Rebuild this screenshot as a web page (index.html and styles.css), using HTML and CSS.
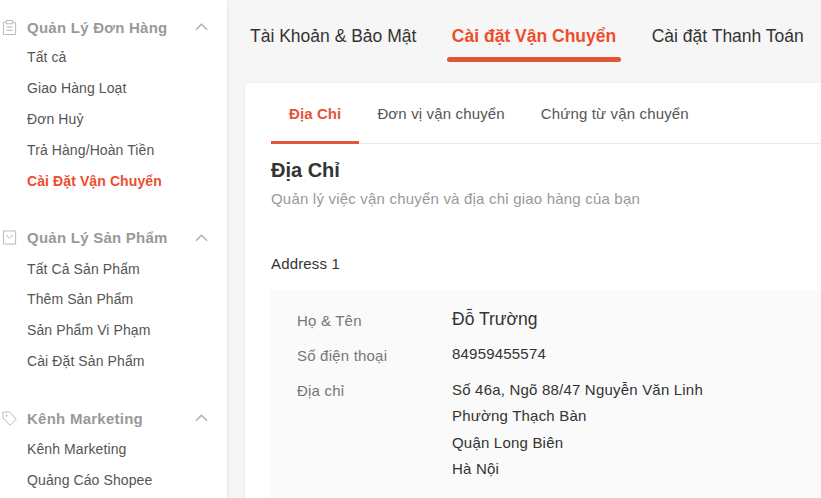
FILE: index.html
```html
<!DOCTYPE html>
<html lang="vi">
<head>
    <meta charset="UTF-8" />
    <title>Cài đặt Vận Chuyển</title>
    <link rel="stylesheet" href="styles.css">
</head>
<body>
    <aside class="sidebar">
        <section class="group">
            <div class="group-title">
                <svg class="group-icon" viewBox="0 0 16 16"><path d="M4 2.500H1.500v13h13v-13H12M4.500 .5h7v3.500h-7zM4.500 7.500h7M4.500 11h7"/></svg>
                <span>Quản Lý Đơn Hàng</span>
                <svg class="chevron" viewBox="0 0 14 8"><path d="M1 7l6-6 6 6"/></svg>
            </div>
            <a href="#">Tất cả</a>
            <a href="#">Giao Hàng Loạt</a>
            <a href="#">Đơn Huỷ</a>
            <a href="#">Trả Hàng/Hoàn Tiền</a>
            <a href="#" class="active">Cài Đặt Vận Chuyển</a>
        </section>
        <section class="group">
            <div class="group-title">
                <svg class="group-icon" viewBox="0 0 16 16"><path d="M1.500 1h13v14h-13zM5 5c.5 4 5.500 4 6 0"/></svg>
                <span>Quản Lý Sản Phẩm</span>
                <svg class="chevron" viewBox="0 0 14 8"><path d="M1 7l6-6 6 6"/></svg>
            </div>
            <a href="#">Tất Cả Sản Phẩm</a>
            <a href="#">Thêm Sản Phẩm</a>
            <a href="#">Sản Phẩm Vi Phạm</a>
            <a href="#">Cài Đặt Sản Phẩm</a>
        </section>
        <section class="group">
            <div class="group-title">
                <svg class="group-icon" viewBox="0 0 16 16"><path d="M.8 1.500l7-.7 7.400 7.900-6.500 6.500-7.600-7.500zM4.300 4.500h1v1h-1z"/></svg>
                <span>Kênh Marketing</span>
                <svg class="chevron" viewBox="0 0 14 8"><path d="M1 7l6-6 6 6"/></svg>
            </div>
            <a href="#">Kênh Marketing</a>
            <a href="#">Quảng Cáo Shopee</a>
        </section>
    </aside>

    <main class="main">
        <nav class="top-tabs">
            <a href="#">Tài Khoản &amp; Bảo Mật</a>
            <a href="#" class="active">Cài đặt Vận Chuyển</a>
            <a href="#">Cài đặt Thanh Toán</a>
        </nav>
        <div class="card">
            <nav class="sub-tabs">
                <a href="#" class="active">Địa Chỉ</a>
                <a href="#">Đơn vị vận chuyển</a>
                <a href="#">Chứng từ vận chuyển</a>
            </nav>
            <h2>Địa Chỉ</h2>
            <p class="subtitle">Quản lý việc vận chuyển và địa chỉ giao hàng của bạn</p>
            <p class="address-name">Address 1</p>
            <div class="address">
                <div class="row">
                    <span class="label">Họ &amp; Tên</span>
                    <span class="name">Đỗ Trường</span>
                </div>
                <div class="row">
                    <span class="label">Số điện thoại</span>
                    <span class="value">84959455574</span>
                </div>
                <div class="row">
                    <span class="label">Địa chỉ</span>
                    <div class="value lines">
                        <span>Số 46a, Ngõ 88/47 Nguyễn Văn Linh</span>
                        <span>Phường Thạch Bàn</span>
                        <span>Quận Long Biên</span>
                        <span>Hà Nội</span>
                    </div>
                </div>
            </div>
        </div>
    </main>
</body>
</html>
```
FILE: styles.css
```css
* {
    margin: 0;
    padding: 0;
    box-sizing: border-box;
    font-family: "Liberation Sans", Arial, sans-serif;
}
html, body {
    height: 100%;
    overflow: hidden;
}
body {
    display: flex;
    background: #f6f6f6;
    color: #333;
}
a {
    text-decoration: none;
    color: inherit;
}
.sidebar {
    width: 227px;
    flex-shrink: 0;
    padding-top: 17.4px;
    background: #fff;
    box-shadow: 0 1px 4px rgba(0, 0, 0, 0.1);
}
.group {
    margin-bottom: 32px;
}
.group-title {
    display: flex;
    align-items: center;
    height: 20px;
    padding-left: 2px;
    margin-bottom: 4.6px;
    color: #999;
    font-size: 15px;
    font-weight: 700;
    letter-spacing: 0.25px;
}
.group + .group .group-title {
    margin-bottom: 5.2px;
}
.group-title span {
    width: 168px;
    margin-left: 10px;
}
.group-icon {
    width: 15px;
    height: 15px;
    fill: none;
    stroke: #b4b4b4;
    stroke-width: 1;
}
.chevron {
    width: 13px;
    height: 8px;
    fill: none;
    stroke: #aaa;
    stroke-width: 1.3;
}
.group > a {
    display: flex;
    align-items: center;
    height: 30.8px;
    padding-left: 27px;
    color: #555;
    font-size: 14px;
    letter-spacing: 0.1px;
}
.group > a.active {
    color: #ee4d2d;
    font-weight: 700;
}
.main {
    flex: 1;
    min-width: 0;
    padding-left: 18px;
}
.top-tabs {
    display: flex;
    gap: 35.5px;
    height: 83px;
    padding: 24px 0 0 5px;
    font-size: 17.5px;
    white-space: nowrap;
    color: #333;
}
.top-tabs a {
    position: relative;
    line-height: 24px;
}
.top-tabs a.active {
    color: #ee4d2d;
    font-weight: 700;
}
.top-tabs a.active::after {
    content: "";
    position: absolute;
    left: -5px;
    right: -5px;
    top: 33px;
    height: 5px;
    border-radius: 3px;
    background: #e2553a;
}
.card {
    height: 415px;
    padding: 0 0 0 26px;
    background: #fff;
    border-radius: 4px 0 0 0;
    box-shadow: 0 1px 4px rgba(0, 0, 0, 0.08);
}
.sub-tabs {
    display: flex;
    height: 61px;
    border-bottom: 1px solid #e8e8e8;
    font-size: 15px;
    letter-spacing: 0.15px;
    color: #555;
}
.sub-tabs a {
    height: 61px;
    padding: 22px 18px 0;
}
.sub-tabs a.active {
    color: #e2553a;
    font-weight: 700;
    letter-spacing: 0.1px;
    border-bottom: 3px solid #e2553a;
}
.card h2 {
    margin-top: 15px;
    font-size: 20px;
    line-height: 22px;
    color: #333;
}
.subtitle {
    margin-top: 9px;
    font-size: 15px;
    line-height: 18px;
    letter-spacing: 0.2px;
    color: #999;
}
.address-name {
    margin-top: 47px;
    font-size: 15px;
    line-height: 18px;
    letter-spacing: 0.15px;
    color: #333;
}
.address {
    margin-top: 17px;
    padding: 17px 0 18px 26px;
    background: #fafafa;
}
.row {
    display: flex;
    margin-bottom: 9.5px;
    font-size: 15px;
    letter-spacing: 0.2px;
    line-height: 24px;
}
.label {
    width: 155px;
    padding-top: 1.5px;
    color: #777;
}
.name {
    font-size: 17.5px;
    letter-spacing: 0;
    color: #333;
}
.value {
    color: #333;
}
.lines {
    display: flex;
    flex-direction: column;
    line-height: 26.3px;
}
```
